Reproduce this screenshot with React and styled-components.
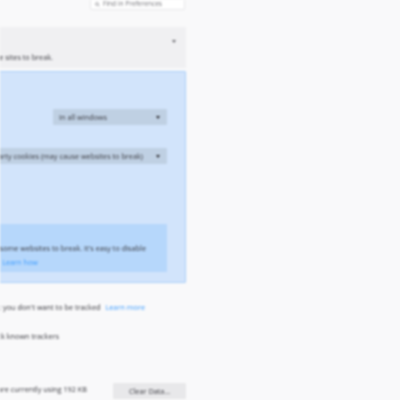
import React from 'react'
import styled, {createGlobalStyle} from 'styled-components'

const GlobalStyle = createGlobalStyle`
  html, body {
    margin: 0;
    width: 400px;
    height: 400px;
    overflow: hidden;
    background: #f9f9fa;
  }
`

const Page = styled.div`
  width: 400px;
  height: 400px;
  overflow: hidden;
  background: #f9f9fa;
  color: #3a3a40;
  font-family: "Open Sans", "Liberation Sans", sans-serif;
  font-size: 7.3px;
  filter: blur(0.8px);
`

// the column runs off the left edge of the window
const Column = styled.main`
  width: 386px;
  margin-left: -200px;
  display: flex;
  flex-direction: column;
`

const SearchRow = styled.div`
  height: 27px;
  display: flex;
  justify-content: flex-end;
  align-items: flex-start;
`

const SearchBox = styled.div`
  width: 95px;
  height: 10px;
  margin-right: 1px;
  padding: 0 0 1px 4px;
  box-sizing: border-box;
  display: flex;
  align-items: flex-end;
  gap: 3px;
  background: #fff;
  border: 1px solid #e6e6e8;
  border-top: none;
  border-radius: 0 0 2px 2px;
  color: #77777c;
  font-size: 6.6px;
  line-height: 8px;
  white-space: nowrap;
`

const SearchIcon = styled.svg`
  width: 5px;
  height: 5px;
  margin-bottom: 1px;
  flex: none;
`

const CollapsedPanel = styled.section`
  height: 41px;
  background: #f0f0f2;
  display: flex;
  flex-direction: column;
  align-items: flex-end;
`

const Chevron = styled.span`
  width: 0;
  height: 0;
  margin: 13px 10px 0 0;
  border-left: 2.5px solid transparent;
  border-right: 2.5px solid transparent;
  border-top: 3px solid #6a6a70;
`

const Line = styled.div`
  display: flex;
  justify-content: flex-end;
  align-items: center;
  white-space: nowrap;
  height: 10px;
  margin-top: ${props => props.$top || 0}px;
  padding-right: ${props => props.$right || 0}px;
  gap: ${props => props.$gap || 0}px;
`

const BluePanel = styled.section`
  margin-top: 3px;
  height: 212px;
  box-sizing: border-box;
  background: #d2e4fb;
  border: 1px solid #a9cff8;
  border-radius: 1px;
  padding: 37px 18px 0 0;
  display: flex;
  flex-direction: column;
  align-items: flex-end;
`

const Select = styled.div`
  width: ${props => props.$width}px;
  height: 16px;
  margin-top: ${props => props.$top || 0}px;
  box-sizing: border-box;
  padding: 0 7px 0 6px;
  display: flex;
  align-items: center;
  justify-content: ${props => props.$clipped ? 'flex-end' : 'space-between'};
  gap: 13px;
  background: #bfd0e3;
  border-radius: 1px;
  color: #3a3a40;
  white-space: nowrap;
`

const Caret = styled.span`
  width: 0;
  height: 0;
  flex: none;
  border-left: 2px solid transparent;
  border-right: 2px solid transparent;
  border-top: 3px solid #2b2b30;
`

const InfoBox = styled.div`
  width: 300px;
  height: 48px;
  margin-top: 60px;
  box-sizing: border-box;
  padding: 19px 0 0;
  background: #b6d7fb;
  border-radius: 1px;
`

const Link = styled.a`
  color: #3c9cff;
`

const PlainSection = styled.section`
  display: flex;
  flex-direction: column;
`

const DataRow = styled.div`
  margin-top: 42px;
  display: flex;
  justify-content: flex-end;
  align-items: flex-start;
  gap: 26px;
  white-space: nowrap;
  line-height: 12px;
`

const Button = styled.button`
  width: 73px;
  height: 16px;
  padding: 0;
  border: none;
  border-radius: 1px;
  background: #e8e8ea;
  color: #3a3a40;
  font: inherit;
`

export default function App() {
  return (
    <Page>
      <GlobalStyle />
      <Column>
        <SearchRow>
          <SearchBox>
            <SearchIcon viewBox='0 0 10 10'>
              <circle cx='4' cy='4' r='3' fill='none' stroke='#77777c' strokeWidth='1.2' />
              <path d='M6.5 6.5 9 9' stroke='#77777c' strokeWidth='1.2' />
            </SearchIcon>
            Find in Preferences
          </SearchBox>
        </SearchRow>

        <CollapsedPanel>
          <Chevron />
          <Line $top={9} $right={133}>Stricter protection that may cause some sites to break.</Line>
        </CollapsedPanel>

        <BluePanel>
          <Select $width={114}>
            In all windows
            <Caret />
          </Select>
          <Select $width={190} $top={23} $clipped>
            All third-party cookies (may cause websites to break)
            <Caret />
          </Select>
          <InfoBox>
            <Line $right={21}>Blocking trackers and cookies could cause some websites to break. It's easy to disable</Line>
            <Line $top={4} $right={129} $gap={4}>
              blocking for sites you trust.
              <Link>Learn how</Link>
            </Line>
          </InfoBox>
        </BluePanel>

        <PlainSection>
          <Line $top={19} $right={41} $gap={5}>
            Send websites a “Do Not Track” signal that you don't want to be tracked
            <Link>Learn more</Link>
          </Line>
          <Line $top={19} $right={127}>Only when Firefox is set to block known trackers</Line>
        </PlainSection>

        <DataRow>
          Your stored cookies, site data, and cache are currently using 192 KB
          <Button>Clear Data…</Button>
        </DataRow>
      </Column>
    </Page>
  )
}
